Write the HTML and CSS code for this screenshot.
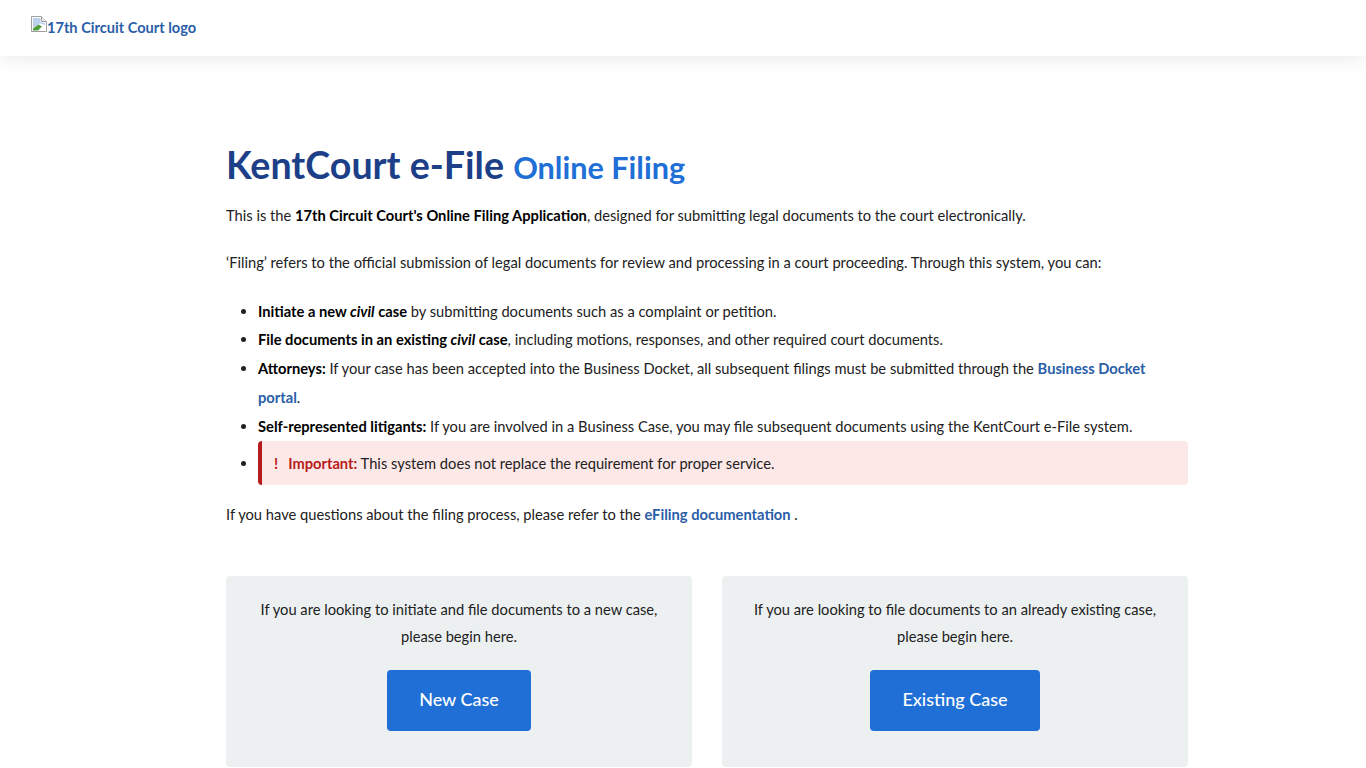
FILE: index.html
```html
<!DOCTYPE html>
<html lang="en">
<head>
<meta charset="utf-8">
<title>KentCourt e-File</title>
<link rel="stylesheet" href="styles.css">
</head>
<body>
<header class="topbar">
  <a class="logo" href="#">
    <svg class="broken" width="16" height="16" viewBox="0 0 16 16" aria-hidden="true">
      <path d="M0.5 0.5H10.5L15.5 5.5V15.5H0.5Z" fill="#fff" stroke="#a0a0a0"/>
      <path d="M10.5 0.5V5.5H15.5" fill="#ececec" stroke="#a0a0a0"/>
      <path d="M2 2H9.5V6.5H14V9L9 7.5L2 12Z" fill="#bcd0f0"/>
      <path d="M2 14.5V12.5L7.5 8.5L11 10.5L7 14.5Z" fill="#4f9e3c"/>
    </svg><span>17th Circuit Court logo</span>
  </a>
</header>
<main class="page">
  <h1>KentCourt e-File <small>Online Filing</small></h1>
  <p>This is the <b>17th Circuit Court's Online Filing Application</b>, designed for submitting legal documents to the court electronically.</p>
  <p>‘Filing’ refers to the official submission of legal documents for review and processing in a court proceeding. Through this system, you can:</p>
  <ul>
    <li><b>Initiate a new <i>civil</i> case</b> by submitting documents such as a complaint or petition.</li>
    <li><b>File documents in an existing <i>civil</i> case</b>, including motions, responses, and other required court documents.</li>
    <li><b>Attorneys:</b> If your case has been accepted into the Business Docket, all subsequent filings must be submitted through the <a href="#">Business Docket portal</a>.</li>
    <li><b>Self-represented litigants:</b> If you are involved in a Business Case, you may file subsequent documents using the KentCourt e-File system.</li>
    <li><div class="alert"><span class="bang">!</span><b>Important:</b> This system does not replace the requirement for proper service.</div></li>
  </ul>
  <p>If you have questions about the filing process, please refer to the <a href="#">eFiling documentation</a> .</p>
  <section class="cards">
    <div class="card">
      <p>If you are looking to initiate and file documents to a new case, please begin here.</p>
      <a class="btn btn-new" href="#">New Case</a>
    </div>
    <div class="card">
      <p>If you are looking to file documents to an already existing case, please begin here.</p>
      <a class="btn btn-existing" href="#">Existing Case</a>
    </div>
  </section>
</main>
</body>
</html>
```
FILE: styles.css
```css
* { box-sizing: border-box; }
html, body { margin: 0; padding: 0; }
body {
  font-family: Lato, "Open Sans", sans-serif;
  font-size: 14.7px;
  line-height: 28.8px;
  color: #212121;
  background: #fff;
  height: 768px;
  overflow: hidden;
}
.topbar {
  height: 56px;
  padding: 16px 31px 0;
  background: #fff;
  box-shadow: 0 2px 20px rgba(0,0,0,.09);
}
.logo {
  display: flex;
  align-items: flex-start;
  color: #2a5ea8;
  font-weight: 700;
  font-size: 14.6px;
  line-height: 24px;
  text-decoration: none;
}
.broken { flex: none; }
.page {
  width: 962px;
  margin: 0 0 0 226px;
  padding-top: 82px;
}
h1 {
  margin: 0 0 6px;
  font-size: 37.6px;
  line-height: 54px;
  font-weight: 700;
  color: #1c3f88;
}
h1 small {
  font-size: 30.6px;
  color: #1f6fd6;
  font-weight: 700;
}
p { margin: 0 0 18px; }
b { color: #000; }
ul { margin: 20px 0 15px; padding-left: 32px; }
a { color: #2a5ea8; font-weight: 700; text-decoration: none; }
.alert {
  display: block;
  margin: 0;
  padding: 8px 12px;
  background: #fde8e8;
  border-left: 4px solid #b71c1c;
  border-radius: 4px;
}
.alert b { color: #b71c1c; }
.bang { color: #b71c1c; font-weight: 700; margin-right: 10px; }
.cards {
  display: grid;
  grid-template-columns: 466px 466px;
  gap: 30px;
  margin-top: 47px;
}
.card {
  height: 191px;
  padding: 20px 30px;
  background: #ecf0f1;
  border-radius: 4px;
  text-align: center;
  line-height: 27px;
}
.card p { margin: 0 0 20px; }
.btn {
  display: block;
  width: fit-content;
  height: 61px;
  margin: 0 auto;
  line-height: 59px;
  padding: 0 32px;
  background: #1f6fd6;
  color: #fff;
  font-size: 18px;
  font-weight: 500;
  border-radius: 4px;
}
```
